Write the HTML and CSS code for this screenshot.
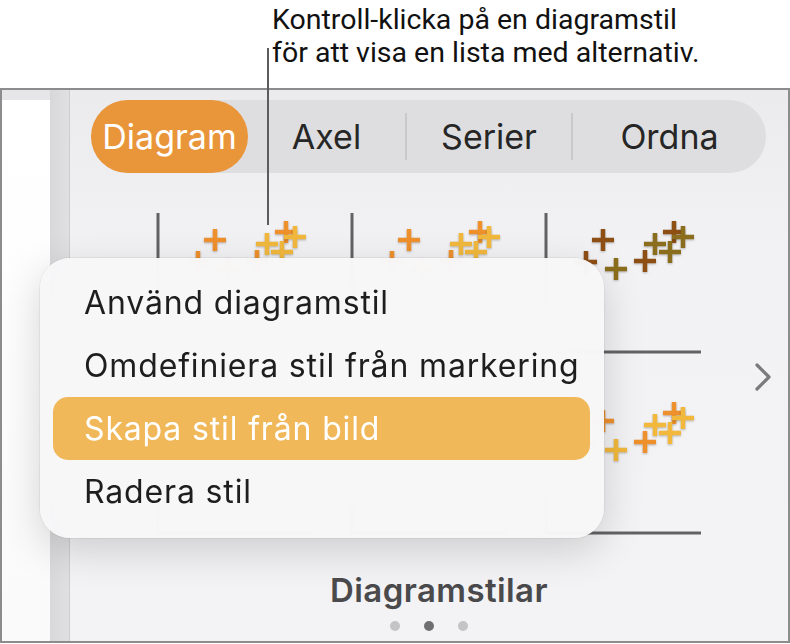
FILE: index.html
```html
<!DOCTYPE html>
<html lang="sv">
<head>
    <meta charset="UTF-8">
    <meta name="viewport" content="width=device-width, initial-scale=1.0">
    <title>Diagramstilar</title>
    <link rel="stylesheet" href="styles.css">
</head>
<body>

    <div class="page">
        <p class="callout">Kontroll-klicka på en diagramstil<br>för att visa en lista med alternativ.</p>
        <div class="leader"></div>

        <div class="frame">
            <div class="doc"></div>
            <div class="gutter"></div>

            <div class="panel">
                <div class="segments">
                    <div class="segment selected">Diagram</div>
                    <div class="segment axel">Axel</div>
                    <div class="segment serier">Serier</div>
                    <div class="segment ordna">Ordna</div>
                </div>

                <div class="styles-area">
                    <div class="thumbs">
                        <!-- row 1 -->
                        <svg class="thumb warm" viewBox="0 0 157 140">
                            <path class="axis" d="M2 0V139H157"/>
                            <path class="s1" d="M48 27h22M59 16v22M31 49h22M42 38v22M90 48h22M101 37v22M119 19h22M130 8v22"/>
                            <path class="s2" d="M61 56h22M72 45v22M100 31h22M111 20v22M115 39h22M126 28v22M128 24h22M139 13v22"/>
                        </svg>
                        <svg class="thumb warm" viewBox="0 0 157 140">
                            <path class="axis" d="M2 0V139H157"/>
                            <path class="s1" d="M48 27h22M59 16v22M31 49h22M42 38v22M90 48h22M101 37v22M119 19h22M130 8v22"/>
                            <path class="s2" d="M61 56h22M72 45v22M100 31h22M111 20v22M115 39h22M126 28v22M128 24h22M139 13v22"/>
                        </svg>
                        <svg class="thumb earth" viewBox="0 0 157 140">
                            <path class="axis" d="M2 0V139H157"/>
                            <path class="s1" d="M48 27h22M59 16v22M31 49h22M42 38v22M90 48h22M101 37v22M119 19h22M130 8v22"/>
                            <path class="s2" d="M61 56h22M72 45v22M100 31h22M111 20v22M115 39h22M126 28v22M128 24h22M139 13v22"/>
                        </svg>
                        <!-- row 2 -->
                        <svg class="thumb pale" viewBox="0 0 157 140">
                            <path class="axis" d="M2 0V139H157"/>
                            <path class="s1" d="M48 27h22M59 16v22M31 49h22M42 38v22M90 48h22M101 37v22M119 19h22M130 8v22"/>
                            <path class="s2" d="M61 56h22M72 45v22M100 31h22M111 20v22M115 39h22M126 28v22M128 24h22M139 13v22"/>
                        </svg>
                        <svg class="thumb pale" viewBox="0 0 157 140">
                            <path class="axis" d="M2 0V139H157"/>
                            <path class="s1" d="M48 27h22M59 16v22M31 49h22M42 38v22M90 48h22M101 37v22M119 19h22M130 8v22"/>
                            <path class="s2" d="M61 56h22M72 45v22M100 31h22M111 20v22M115 39h22M126 28v22M128 24h22M139 13v22"/>
                        </svg>
                        <svg class="thumb warm" viewBox="0 0 157 140">
                            <path class="axis" d="M2 0V139H157"/>
                            <path class="s1" d="M48 27h22M59 16v22M31 49h22M42 38v22M90 48h22M101 37v22M119 19h22M130 8v22"/>
                            <path class="s2" d="M61 56h22M72 45v22M100 31h22M111 20v22M115 39h22M126 28v22M128 24h22M139 13v22"/>
                        </svg>
                    </div>

                    <svg class="chevron" viewBox="0 0 18 30">
                        <path d="M3 3L15 15L3 27"/>
                    </svg>
                </div>

                <div class="title">Diagramstilar</div>

                <div class="dots">
                    <span class="dot"></span>
                    <span class="dot active"></span>
                    <span class="dot"></span>
                </div>
            </div>
        </div>

        <!-- context menu over the chart styles -->
        <div class="menu">
            <div class="menu-item">Använd diagramstil</div>
            <div class="menu-item">Omdefiniera stil från markering</div>
            <div class="menu-item highlighted">Skapa stil från bild</div>
            <div class="menu-item">Radera stil</div>
        </div>
    </div>

</body>
</html>
```

FILE: styles.css
```css
body {
    margin: 0;
    background-color: #fff;
    font-family: Inter, "Noto Sans", sans-serif;
    color: #1d1d1f;
}
.page {
    position: relative;
    width: 790px;
    height: 644px;
    overflow: hidden;
}
.callout {
    margin: 0;
    height: 88px;
    box-sizing: border-box;
    padding: 3px 0 0 272px;
    font-family: Roboto, sans-serif;
    font-size: 28.5px;
    line-height: 33px;
    color: #111;
}
.leader {
    position: absolute;
    left: 267px;
    top: 48px;
    width: 2px;
    height: 177px;
    background-color: #5c5c5c;
}
.frame {
    display: flex;
    height: 555px;
    box-sizing: border-box;
    border: 2px solid #8c8c8c;
}
.doc {
    width: 48px;
    background: linear-gradient(#e6e6e8 0, #e6e6e8 10px, #fff 10px, #fafafa 100%);
}
.gutter {
    width: 19px;
    background: linear-gradient(90deg, #d8d8da, #e0e0e2);
    border-right: 1px solid #cdcdcf;
}
.panel {
    flex: 1;
    background: linear-gradient(#ebebed, #f2f2f4 160px, #f3f3f5);
    padding-top: 10px;
}

/* segmented control */
.segments {
    display: flex;
    margin-left: 21px;
    width: 675px;
    height: 73px;
    border-radius: 37px;
    background-color: #dedee0;
}
.segment {
    display: flex;
    align-items: center;
    justify-content: center;
    font-size: 34px;
    color: #262626;
    width: 157px;
}
.segment.selected {
    background-color: #e9953a;
    color: #fff;
    border-radius: 37px;
}
.segment.serier {
    width: 168px;
    box-sizing: border-box;
    border-left: 2px solid #c9c9cb;
    border-right: 2px solid #c9c9cb;
}
.segment.serier,
.segment.ordna {
    height: 47px;
    align-self: center;
}
.segment.ordna {
    width: 193px;
}

/* chart styles grid */
.styles-area {
    display: flex;
    align-items: center;
    margin-top: 40px;
}
.thumbs {
    display: grid;
    grid-template-columns: repeat(3, 157px);
    grid-auto-rows: 140px;
    column-gap: 37px;
    row-gap: 41px;
    margin-left: 86px;
}
.thumb {
    width: 157px;
    height: 140px;
    overflow: visible;
}
.thumb path {
    fill: none;
}
.thumb .axis {
    stroke: #626264;
    stroke-width: 3;
}
.thumb .s1,
.thumb .s2 {
    stroke-width: 4.5;
    filter: drop-shadow(0 1px 1px rgba(0, 0, 0, 0.25));
}
.warm .s1 { stroke: #ee902c; }
.warm .s2 { stroke: #f1b83c; }
.earth .s1 { stroke: #8e4f15; }
.earth .s2 { stroke: #8b6e1d; }
.pale .s1 { stroke: #f3c98c; }
.pale .s2 { stroke: #f5dca0; }
.chevron {
    width: 18px;
    height: 30px;
    margin-left: 53px;
    margin-top: 6px;
}
.chevron path {
    fill: none;
    stroke: #7b7b7d;
    stroke-width: 3.2;
    stroke-linecap: round;
    stroke-linejoin: round;
}

.title {
    margin-top: 37px;
    padding-left: 20px;
    text-align: center;
    font-size: 33px;
    line-height: 38px;
    letter-spacing: 0.4px;
    font-weight: 600;
    color: #4a4a4c;
}
.dots {
    display: flex;
    justify-content: center;
    gap: 24px;
    margin-top: 12px;
}
.dot {
    width: 10px;
    height: 10px;
    border-radius: 50%;
    background-color: #c4c4c6;
}
.dot.active {
    background-color: #6f6f71;
}

/* context menu */
.menu {
    position: absolute;
    left: 40px;
    top: 258px;
    width: 564px;
    height: 280px;
    box-sizing: border-box;
    padding: 13px 14px 13px 13px;
    border-radius: 30px;
    background-color: rgba(247, 247, 248, 0.97);
    backdrop-filter: blur(30px);
    box-shadow: 0 12px 40px rgba(0, 0, 0, 0.16), 0 0 0 1px rgba(0, 0, 0, 0.05);
}
.menu-item {
    height: 63px;
    display: flex;
    align-items: center;
    padding-left: 31px;
    font-size: 32px;
    letter-spacing: 0.85px;
    color: #1e1e1e;
    border-radius: 15px;
}
.menu-item.highlighted {
    background-color: #f0b859;
    color: #fff;
}
```
